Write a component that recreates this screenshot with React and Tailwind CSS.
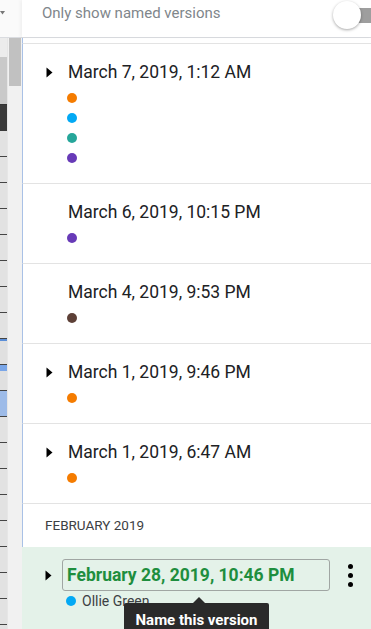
import React from "react";

const Tri = () => (
  <svg width="7" height="11" viewBox="0 0 7 11" className="block">
    <path d="M0.5 0.5 L6.5 5.5 L0.5 10.5 Z" fill="#000" />
  </svg>
);

const Dot = ({ c }) => (
  <div className="h-[20px] flex items-center">
    <div className="w-[10px] h-[10px] rounded-full -ml-px" style={{ backgroundColor: c }} />
  </div>
);

const Row = ({ title, dots, arrow }) => (
  <div className="flex shrink-0 border-b border-l border-b-[#e3e3e3] border-l-[#a9c1e6] pt-[16px] pb-[15px]">
    <div className="w-[45px] shrink-0 pl-[23px] h-[24px] flex items-center">{arrow && <Tri />}</div>
    <div className="flex flex-col">
      <div className="h-[24px] flex items-center text-[17.5px] text-[#202124] whitespace-nowrap">{title}</div>
      <div className="mt-[4px] flex flex-col">
        {dots.map((c, i) => (
          <Dot key={i} c={c} />
        ))}
      </div>
    </div>
  </div>
);

const ORANGE = "#f57c00";
const BLUE = "#03a9f4";
const TEAL = "#26a69a";
const PURPLE = "#673ab7";
const BROWN = "#5d4037";

export default function App() {
  const sliverLines = [];
  for (let i = 0; i < 22; i++) sliverLines.push(i);
  return (
    <div
      className="w-[371px] h-[629px] overflow-hidden bg-white relative flex flex-col"
      style={{ fontFamily: "Roboto, 'Noto Sans', sans-serif" }}
    >
      {/* header */}
      <div className="h-[38px] shrink-0 flex border-b border-[#dadce0]">
        <div className="w-[22px] shrink-0 bg-[#fafafa] relative">
          <svg width="5" height="4" viewBox="0 0 5 4" className="absolute left-0 top-[11px]">
            <path d="M0 0 L5 0 L2.5 3.5 Z" fill="#777" />
          </svg>
        </div>
        <div className="flex-1 flex items-start pl-[20px] pt-[2px] relative shadow-[-2px_0_3px_rgba(0,0,0,0.04)]">
          <span className="text-[15px] text-[#80868b] leading-[22px]">Only show named versions</span>
          <div className="ml-auto relative w-[40px] h-[28px]">
            <div className="absolute left-[12px] top-[6px] w-[40px] h-[15px] rounded-full bg-[#9e9e9e]" />
            <div className="absolute left-[2px] top-[-1px] w-[28px] h-[28px] rounded-full bg-white shadow-[0_1px_3px_rgba(0,0,0,0.35)]" />
          </div>
        </div>
      </div>

      {/* body */}
      <div className="flex-1 flex min-h-0">
        {/* spreadsheet sliver */}
        <div className="w-[7px] shrink-0 flex flex-col bg-[#e4e4e4]">
          <div className="h-[19px] shrink-0 bg-[#ececec]" />
          <div className="h-[48px] shrink-0 bg-[#c9c9c9] border-b border-[#333]" />
          <div className="h-[26px] shrink-0 bg-[#3a3a3a]" />
          {sliverLines.map((i) => (
            <div
              key={i}
              className={
                "h-[26px] shrink-0 border-b border-[#444] " +
                (i === 8
                  ? "bg-[#e0e0e0] border-t-2 border-t-[#5b8fd8]"
                  : i === 9
                  ? "bg-[#e0e0e0] border-t-[6px] border-t-[#7aa6e8]"
                  : i === 10
                  ? "bg-[#9dbbe8]"
                  : "bg-[#e2e2e2]")
              }
            />
          ))}
        </div>
        {/* scrollbar */}
        <div className="w-[15px] shrink-0 bg-[#f1f1f1] border-l border-[#e6e6e6] px-px">
          <div className="w-[12px] h-[48px] bg-[#c1c1c1]" />
        </div>

        {/* content */}
        <div className="flex-1 flex flex-col min-w-0">
          <div className="h-[6px] shrink-0 border-l border-b border-l-[#a9c1e6] border-b-[#e3e3e3]" />
          <Row title="March 7, 2019, 1:12 AM" dots={[ORANGE, BLUE, TEAL, PURPLE]} arrow />
          <Row title="March 6, 2019, 10:15 PM" dots={[PURPLE]} />
          <Row title="March 4, 2019, 9:53 PM" dots={[BROWN]} />
          <Row title="March 1, 2019, 9:46 PM" dots={[ORANGE]} arrow />
          <Row title="March 1, 2019, 6:47 AM" dots={[ORANGE]} arrow />
          <div className="h-[43px] shrink-0 flex items-center pl-[22px] border-l border-[#a9c1e6] text-[13.5px] text-[#3c4043]">
            FEBRUARY 2019
          </div>
          <div className="flex-1 bg-[#e4f2e9] flex pt-[12px]">
            <div className="w-[45px] shrink-0 pl-[23px] h-[32px] flex items-center">
              <Tri />
            </div>
            <div className="flex flex-col">
              <div className="-ml-[5px] w-[268px] h-[32px] border border-[#a0a6a3] rounded-[3px] flex items-center pl-[4px] text-[17.5px] font-bold text-[#1e8e3e] whitespace-nowrap">
                February 28, 2019, 10:46 PM
              </div>
              <div className="h-[20px] flex items-center gap-[6px]">
                <div className="w-[10px] h-[10px] rounded-full -ml-px bg-[#03a9f4]" />
                <span className="text-[14px] text-[#3c4043]">Ollie Green</span>
              </div>
            </div>
            <div className="flex-1 h-[32px] flex flex-col items-center justify-center gap-[4px]">
              <div className="w-[5px] h-[5px] rounded-full bg-black" />
              <div className="w-[5px] h-[5px] rounded-full bg-black" />
              <div className="w-[5px] h-[5px] rounded-full bg-black" />
            </div>
          </div>
        </div>
      </div>

      {/* tooltip */}
      <div className="absolute left-[124px] top-[603px] w-[145px] h-[34px] bg-[#2a2a2a] rounded-[2px] flex justify-center pt-[6px]">
        <span className="text-[15px] font-bold text-white leading-[22px] whitespace-nowrap">Name this version</span>
      </div>
      <div className="absolute left-[193px] top-[597px] w-0 h-0 border-l-[6px] border-r-[6px] border-b-[6px] border-l-transparent border-r-transparent border-b-[#2a2a2a]" />
    </div>
  );
}
